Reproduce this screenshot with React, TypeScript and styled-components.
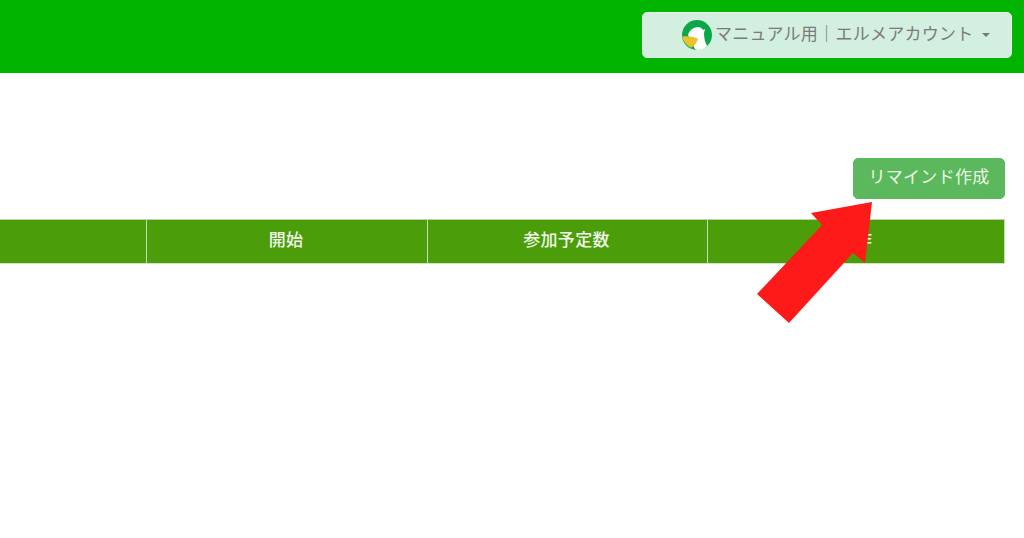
import React from "react";
import styled, { createGlobalStyle } from "styled-components";

const Global = createGlobalStyle`
  html, body { margin: 0; padding: 0; background: #fff; }
  body { font-family: "Liberation Sans", "Noto Sans CJK JP", sans-serif; overflow: hidden; }
`;

const Page = styled.div`
  position: relative;
  width: 1024px;
  height: 538px;
  overflow: hidden;
`;

const Header = styled.header`
  height: 73px;
  background: #00b400;
  display: flex;
  justify-content: flex-end;
  align-items: flex-start;
  padding: 12px 12px 0 0;
  box-sizing: border-box;
`;

const AccountButton = styled.button`
  width: 370px;
  height: 46px;
  background: #d2efdf;
  border: 1px solid #e4f6ea;
  border-radius: 5px;
  display: flex;
  align-items: center;
  padding: 0 0 0 39px;
  box-sizing: border-box;
  font: inherit;
  font-size: 17px;
  letter-spacing: 0.27px;
  color: #7a7a7a;
`;

const Logo = styled.svg`
  width: 30px;
  height: 30px;
  margin-right: 3px;
  flex: none;
`;

const AccountName = styled.span`
  padding-bottom: 5px;
`;

const Caret = styled.span`
  width: 0;
  height: 0;
  margin-left: 8px;
  border-left: 4px solid transparent;
  border-right: 4px solid transparent;
  border-top: 4px solid #777;
`;

const Main = styled.main`
  padding: 85px 19px 0 0;
`;

const Toolbar = styled.div`
  display: flex;
  justify-content: flex-end;
  margin: 0 0 20px;
`;

const CreateButton = styled.button`
  width: 152px;
  height: 41px;
  background: #5cb85c;
  border: 1px solid #5cb85c;
  border-radius: 5px;
  color: #eef6ea;
  font: inherit;
  font-size: 17px;
  letter-spacing: 0.3px;
  padding: 0 0 7px;
  box-sizing: border-box;
`;

const TableHead = styled.div`
  display: grid;
  grid-template-columns: 147px 281px 280px 1fr;
  height: 45px;
  box-sizing: border-box;
  background: #4c9d0a;
  border-top: 1px solid #bcd3a8;
  border-bottom: 1px solid #d3e0c8;
  border-right: 1px solid #c9d8bd;
`;

const HeadCell = styled.div<{ $last?: boolean }>`
  display: flex;
  align-items: center;
  justify-content: center;
  color: #f0f7ea;
  font-size: 17px;
  font-weight: 500;
  letter-spacing: 0.3px;
  padding: 0 2px 6px 0;
  box-sizing: border-box;
  border-right: ${(p) => (p.$last ? "none" : "1px solid #c9d8bd")};
`;

const Arrow = styled.svg`
  position: absolute;
  left: 0;
  top: 0;
  width: 1024px;
  height: 538px;
  pointer-events: none;
`;

export default function App() {
  return (
    <Page>
      <Global />
      <Header>
        <AccountButton>
          <Logo viewBox="0 0 30 30">
            <circle cx="15" cy="15" r="15" fill="#0aa848" />
            <path d="M6 15 C7 11 11 7 16 7 C18 7 20 8 21 10 L23 9 L22 13 C22 18 23 22 25 26 C22 29 19 30 15 30 L13 29 Z" fill="#fff" />
            <path d="M0.3 16.5 C5 16 11 16.5 16 18.5 C14.5 23 12 27 8.5 27.5 C4 25 1 21 0.3 16.5Z" fill="#eac22c" />
          </Logo>
          <AccountName>マニュアル用｜エルメアカウント</AccountName>
          <Caret />
        </AccountButton>
      </Header>
      <Main>
        <Toolbar>
          <CreateButton>リマインド作成</CreateButton>
        </Toolbar>
        <TableHead>
          <HeadCell />
          <HeadCell>開始</HeadCell>
          <HeadCell>参加予定数</HeadCell>
          <HeadCell $last>操作</HeadCell>
        </TableHead>
      </Main>
      <Arrow viewBox="0 0 1024 538">
        <polygon points="872,202 811,213 822,225 757,294 789,323 853,253 865,263" fill="#ff1a1a" />
      </Arrow>
    </Page>
  );
}
